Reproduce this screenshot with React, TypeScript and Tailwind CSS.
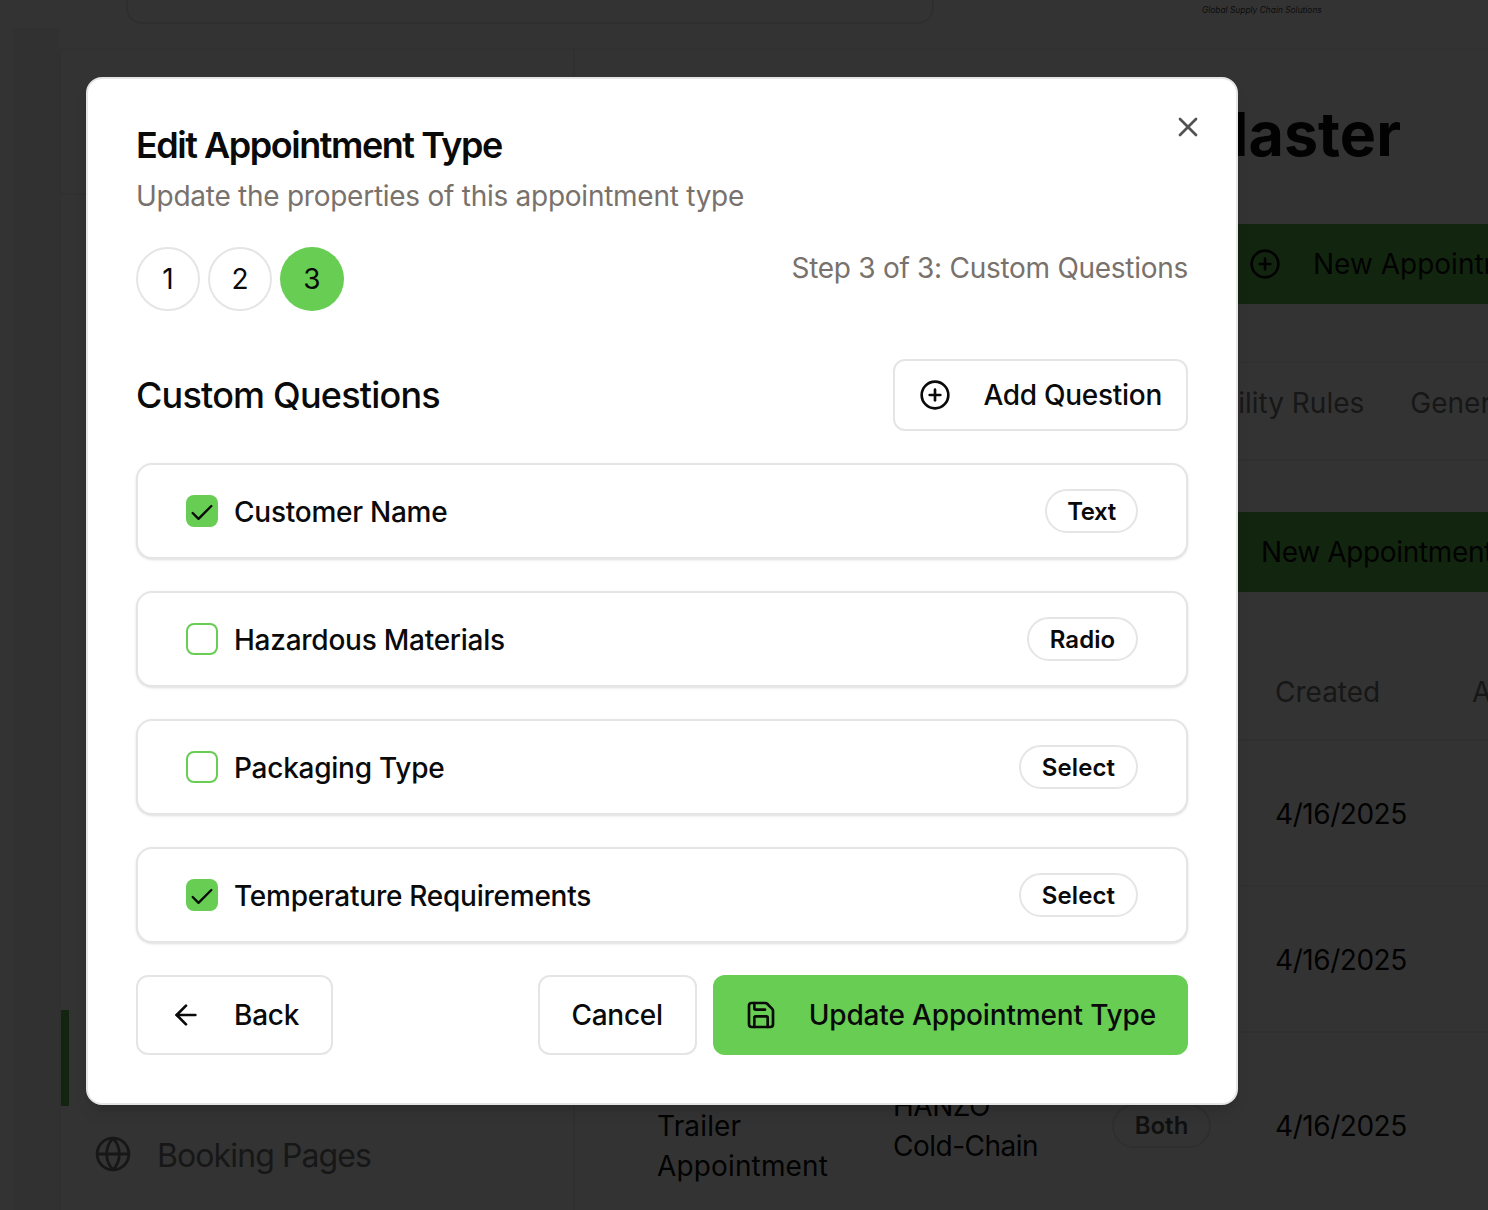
import { ArrowLeft, Check, CirclePlus, Globe, Save, X } from "lucide-react";

const questions = [
  { label: "Customer Name", type: "Text", pill: "w-[93px] tracking-[-0.4px]", checked: true },
  { label: "Hazardous Materials", type: "Radio", pill: "w-[111px] tracking-[0.1px]", checked: false },
  { label: "Packaging Type", type: "Select", pill: "w-[119px] tracking-[0.1px]", checked: false },
  { label: "Temperature Requirements", type: "Select", pill: "w-[119px] tracking-[0.1px]", checked: true },
];

function Background() {
  return (
    <div className="flex h-[1210px] w-[1488px] overflow-hidden bg-white text-[28px] text-[#0a0a0a]">
      {/* far left rail, slightly darker than the page */}
      <div className="w-[59px] shrink-0 pt-[28px] pl-[13px]">
        <div className="h-full bg-[#f6f6f6]" />
      </div>
      <div className="flex min-w-0 flex-1 flex-col">
        {/* header, page is scrolled so only the bottom of it shows */}
        <header className="flex h-[50px] shrink-0 items-start border-b-2 border-[#f2f2f2] pl-[67px]">
          <div className="h-[24px] w-[808px] rounded-b-2xl border-2 border-t-0 border-[#e5e5e5]" />
          <div className="ml-[268px] text-[8.4px] leading-[21px] italic text-[#444]">Global Supply Chain Solutions</div>
        </header>
        <div className="flex min-h-0 flex-1">
          <aside className="flex w-[516px] shrink-0 flex-col border-x-2 border-[#f0f0f0]">
            <div className="h-[145px] border-b-2 border-[#f0f0f0]" />
            <div className="mt-[815px] h-[96px] border-l-8 border-[#5cbc4a]" />
            <div className="flex h-[96px] items-center gap-[25px] pl-[33px] text-[32px] tracking-[-0.9px] text-[#737373]">
              <Globe size={38} strokeWidth={1.8} />
              <span className="translate-y-[2px]">Booking Pages</span>
            </div>
          </aside>
          <main className="min-w-0 flex-1 pl-[82px]">
            <h1 className="mt-[46px] h-[80px] w-[744px] text-right text-[61px] leading-[76px] font-bold whitespace-nowrap">
              Master
            </h1>
            <div className="mt-[48px] flex h-[80px] w-[1000px] items-center gap-[32px] bg-[#5cbc4a] pl-[592px] whitespace-nowrap">
              <CirclePlus size={32} strokeWidth={2} />
              <span>New Appointment Type</span>
            </div>
            <div className="mt-[57px] flex h-[100px] items-center gap-[46px] border-y-2 border-[#f0f0f0] pb-[16px] pl-[486px] whitespace-nowrap text-[#737373]">
              <span>Availability Rules</span>
              <span>General</span>
            </div>
            <div className="mt-[51px] flex h-[80px] w-[1000px] items-center bg-[#5cbc4a] pl-[604px] tracking-[-0.35px] whitespace-nowrap">
              New Appointment
            </div>
            <div className="mt-[49px] flex h-[100px] items-center border-b-2 border-[#f0f0f0] pt-[4px] pl-[618px] whitespace-nowrap text-[#737373]">
              <span className="w-[197px] shrink-0">Created</span>
              <span>Actions</span>
            </div>
            <div className="flex h-[146px] items-center border-b-2 border-[#f0f0f0] pt-[2px] pl-[618px] tracking-[-0.45px]">4/16/2025</div>
            <div className="flex h-[146px] items-center border-b-2 border-[#f0f0f0] pt-[2px] pl-[618px] tracking-[-0.45px]">4/16/2025</div>
            <div className="flex h-[186px] items-center">
              <div className="w-[236px] shrink-0 leading-[40px] tracking-[0.15px]">
                Live
                <br />
                Trailer
                <br />
                Appointment
              </div>
              <div className="w-[219px] shrink-0 leading-[40px] tracking-[-0.5px]">
                HANZO
                <br />
                Cold-Chain
              </div>
              <span className="flex h-[44px] w-[99px] shrink-0 items-center justify-center rounded-full border-2 border-[#e5e5e5] text-[24px] font-semibold text-[#525252]">
                Both
              </span>
              <span className="ml-[64px] tracking-[-0.45px]">4/16/2025</span>
            </div>
          </main>
        </div>
      </div>
    </div>
  );
}

function Question({ label, type, pill, checked }: { label: string; type: string; pill: string; checked: boolean }) {
  return (
    <div className="flex h-[96px] items-center justify-between rounded-2xl border-2 border-[#e5e5e5] bg-white px-[48px] shadow-sm">
      <div className="flex items-center gap-[16px]">
        {checked ? (
          <span className="flex size-[32px] items-center justify-center rounded-lg bg-[#67ce53] text-[#0a0a0a]">
            <Check size={28} strokeWidth={2} className="translate-y-[2px]" />
          </span>
        ) : (
          <span className="size-[32px] rounded-lg border-2 border-[#67ce53] bg-white" />
        )}
        <span className="mt-[2px] text-[28px] leading-[40px] font-medium tracking-[-0.25px]">{label}</span>
      </div>
      <span className={`flex h-[44px] items-center justify-center rounded-full border-2 border-[#e5e5e5] pt-[2px] text-[24px] font-semibold ${pill}`}>
        {type}
      </span>
    </div>
  );
}

export default function App() {
  return (
    <div className="relative h-[1210px] w-[1488px] overflow-hidden font-['Inter',sans-serif]">
      <Background />
      <div className="absolute inset-0 bg-black/80" />

      <div className="absolute top-[77px] left-[86px] flex h-[1028px] w-[1152px] flex-col rounded-2xl border-2 border-[#e5e5e5] bg-white p-[48px] text-[#0a0a0a] shadow-lg">
        <button className="absolute top-[32px] right-[32px] text-[#525252]">
          <X size={32} strokeWidth={2} />
        </button>

        <h2 className="text-[36px] leading-[36px] font-semibold tracking-[-1.47px]">Edit Appointment Type</h2>
        <p className="mt-[13px] text-[28px] leading-[40px] tracking-[-0.26px] text-[#78716c]">
          Update the properties of this appointment type
        </p>

        <div className="mt-[31px] flex items-start justify-between">
          <div className="flex gap-[8px]">
            <span className="flex size-[64px] items-center justify-center rounded-full border-2 border-[#e5e5e5] text-[28px]">1</span>
            <span className="flex size-[64px] items-center justify-center rounded-full border-2 border-[#e5e5e5] text-[28px]">2</span>
            <span className="flex size-[64px] items-center justify-center rounded-full bg-[#67ce53] text-[28px]">3</span>
          </div>
          <span className="mt-[1px] text-[28px] leading-[40px] tracking-[-0.28px] text-[#78716c]">Step 3 of 3: Custom Questions</span>
        </div>

        <div className="mt-[48px] flex items-center justify-between">
          <h3 className="text-[36px] leading-[40px] font-medium tracking-[-0.8px]">Custom Questions</h3>
          <button className="flex h-[72px] items-center gap-[32px] rounded-xl border-2 border-[#e5e5e5] bg-white px-[24px] text-[28px] font-medium tracking-[-0.28px]">
            <CirclePlus size={32} strokeWidth={2} />
            Add Question
          </button>
        </div>

        <div className="mt-[32px] flex flex-col gap-[32px]">
          {questions.map((q) => (
            <Question key={q.label} {...q} />
          ))}
        </div>

        <div className="mt-[32px] flex items-center justify-between">
          <button className="flex h-[80px] items-center gap-[32px] rounded-xl border-2 border-[#e5e5e5] bg-white px-[32px] text-[28px] font-medium tracking-[-0.25px]">
            <ArrowLeft size={32} strokeWidth={2} />
            Back
          </button>
          <div className="flex gap-[16px]">
            <button className="flex h-[80px] items-center rounded-xl border-2 border-[#e5e5e5] bg-white px-[32px] text-[28px] font-medium tracking-[-0.3px]">
              Cancel
            </button>
            <button className="flex h-[80px] items-center gap-[32px] rounded-xl bg-[#67ce53] px-[32px] text-[28px] font-medium tracking-[-0.15px]">
              <Save size={32} strokeWidth={2} />
              Update Appointment Type
            </button>
          </div>
        </div>
      </div>
    </div>
  );
}
